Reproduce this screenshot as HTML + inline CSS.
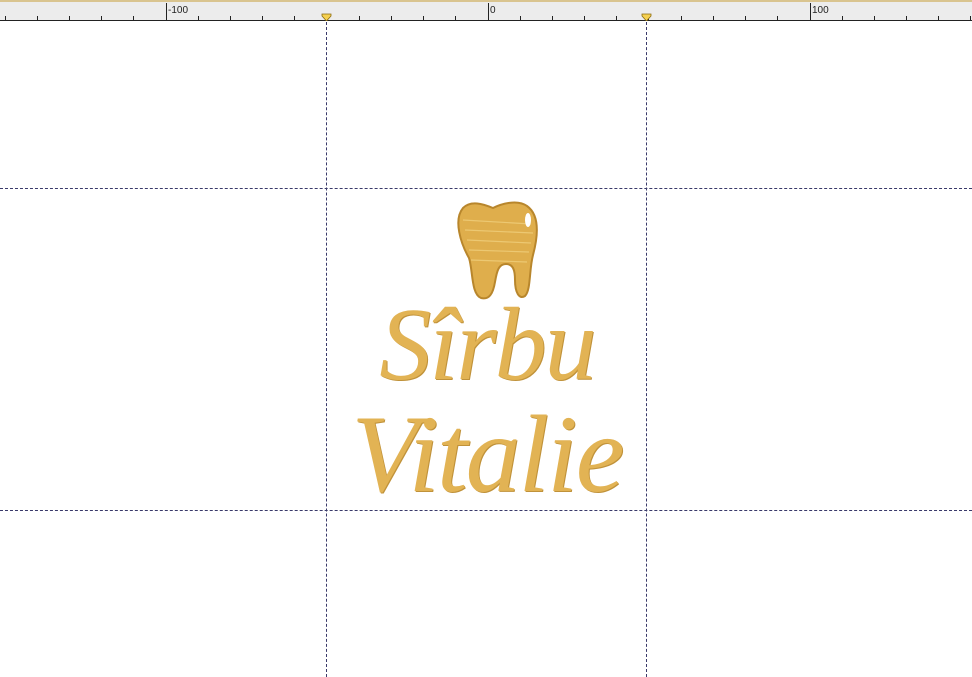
<!DOCTYPE html>
<html><head><meta charset="utf-8"><style>
html,body{margin:0;padding:0;background:#fff;width:972px;height:677px;overflow:hidden;position:relative;font-family:"Liberation Sans",sans-serif}
.ruler{position:absolute;left:0;top:0;width:972px;height:21px;background:#ececec;border-top:2px solid #d9c48f;box-sizing:border-box;border-bottom:1px solid #222}
.v{position:absolute;top:22px;bottom:0;width:0;border-left:1px dashed #3a3a6a}
.h{position:absolute;left:0;right:0;height:0;border-top:1px dashed #3a3a6a}
.t{position:absolute;font-family:"Liberation Serif",serif;font-style:italic;color:#e2b354;text-shadow:1px 1px 0 #c0923a;text-align:center;width:400px;left:287px}
</style></head><body>
<div class="ruler">
<svg width="972" height="21" style="position:absolute;left:0;top:-2px">
<g stroke="#222" stroke-width="1">
<line x1="5.5" y1="16" x2="5.5" y2="20"/><line x1="37.5" y1="16" x2="37.5" y2="20"/><line x1="69.5" y1="16" x2="69.5" y2="20"/><line x1="101.5" y1="16" x2="101.5" y2="20"/><line x1="133.5" y1="16" x2="133.5" y2="20"/>
<line x1="166.5" y1="3" x2="166.5" y2="20"/>
<line x1="198.5" y1="16" x2="198.5" y2="20"/><line x1="230.5" y1="16" x2="230.5" y2="20"/><line x1="262.5" y1="16" x2="262.5" y2="20"/><line x1="294.5" y1="16" x2="294.5" y2="20"/><line x1="326.5" y1="16" x2="326.5" y2="20"/><line x1="359.5" y1="16" x2="359.5" y2="20"/><line x1="391.5" y1="16" x2="391.5" y2="20"/><line x1="423.5" y1="16" x2="423.5" y2="20"/><line x1="455.5" y1="16" x2="455.5" y2="20"/>
<line x1="488.5" y1="3" x2="488.5" y2="20"/>
<line x1="520.5" y1="16" x2="520.5" y2="20"/><line x1="552.5" y1="16" x2="552.5" y2="20"/><line x1="584.5" y1="16" x2="584.5" y2="20"/><line x1="616.5" y1="16" x2="616.5" y2="20"/><line x1="648.5" y1="16" x2="648.5" y2="20"/><line x1="681.5" y1="16" x2="681.5" y2="20"/><line x1="713.5" y1="16" x2="713.5" y2="20"/><line x1="745.5" y1="16" x2="745.5" y2="20"/><line x1="777.5" y1="16" x2="777.5" y2="20"/>
<line x1="810.5" y1="3" x2="810.5" y2="20"/>
<line x1="842.5" y1="16" x2="842.5" y2="20"/><line x1="874.5" y1="16" x2="874.5" y2="20"/><line x1="906.5" y1="16" x2="906.5" y2="20"/><line x1="938.5" y1="16" x2="938.5" y2="20"/><line x1="970.5" y1="16" x2="970.5" y2="20"/>
</g>
<g font-size="10" fill="#222" font-family="Liberation Sans"><text x="168" y="13">-100</text><text x="490" y="13">0</text><text x="812" y="13">100</text></g>
<path d="M322 14 h9 v2 l-4.5 5 l-4.5 -5z" fill="#f5d050" stroke="#8a6a10" stroke-width="0.8"/>
<path d="M642 14 h9 v2 l-4.5 5 l-4.5 -5z" fill="#f5d050" stroke="#8a6a10" stroke-width="0.8"/>
</svg>
</div>
<div class="v" style="left:326px"></div>
<div class="v" style="left:646px"></div>
<div class="h" style="top:188px"></div>
<div class="h" style="top:510px"></div>
<svg width="92" height="102" style="position:absolute;left:451px;top:200px">
<path d="M12 8 C20 0 32 4 42 8 C50 4 66 -1 76 6 C90 16 86 40 82 55 C78 70 80 90 74 96 C68 100 64 92 64 80 C64 70 62 64 55 64 C48 64 46 70 44 82 C42 94 38 100 30 98 C20 94 22 70 18 58 C10 44 2 20 12 8Z" fill="#dfae4c" stroke="#b8862c" stroke-width="2"/>
<g stroke="#f0cf7c" stroke-width="1.2" opacity="0.8"><line x1="12" y1="20" x2="80" y2="24"/><line x1="14" y1="30" x2="82" y2="33"/><line x1="16" y1="40" x2="80" y2="43"/><line x1="18" y1="50" x2="78" y2="52"/><line x1="20" y1="60" x2="76" y2="62"/></g>
<ellipse cx="77" cy="20" rx="3" ry="7" fill="#fff"/>
</svg>
<div class="t" style="top:290px;font-size:104px;line-height:110px;letter-spacing:-2px">Sîrbu</div>
<div class="t" style="top:395px;font-size:110px;line-height:118px;letter-spacing:-2px">Vitalie</div>
</body></html>
